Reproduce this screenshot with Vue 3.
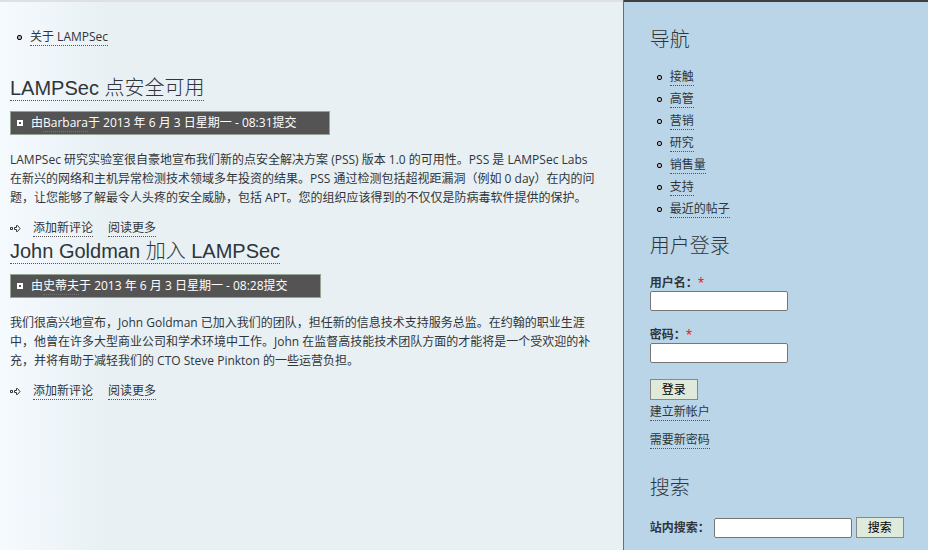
<script setup>
import { ref } from 'vue'

const posts = [
  {
    title: 'LAMPSec 点安全可用',
    author: 'Barbara',
    date: '2013 年 6 月 3 日星期一 - 08:31提交',
    body: 'LAMPSec 研究实验室很自豪地宣布我们新的点安全解决方案 (PSS) 版本 1.0 的可用性。PSS 是 LAMPSec Labs 在新兴的网络和主机异常检测技术领域多年投资的结果。PSS 通过检测包括超视距漏洞（例如 0 day）在内的问题，让您能够了解最令人头疼的安全威胁，包括 APT。您的组织应该得到的不仅仅是防病毒软件提供的保护。',
  },
  {
    title: 'John Goldman 加入 LAMPSec',
    author: '史蒂夫',
    date: '2013 年 6 月 3 日星期一 - 08:28提交',
    body: '我们很高兴地宣布，John Goldman 已加入我们的团队，担任新的信息技术支持服务总监。在约翰的职业生涯中，他曾在许多大型商业公司和学术环境中工作。John 在监督高技能技术团队方面的才能将是一个受欢迎的补充，并将有助于减轻我们的 CTO Steve Pinkton 的一些运营负担。',
  },
]
const navigation = ['接触', '高管', '营销', '研究', '销售量', '支持', '最近的帖子']
const username = ref('')
const password = ref('')
const query = ref('')
</script>

<template>
  <div class="page">
    <main class="content">
      <ul class="menu primary">
        <li><a href="#">关于 LAMPSec</a></li>
      </ul>
      <article v-for="post in posts" :key="post.title" class="post">
        <h2><a href="#">{{ post.title }}</a></h2>
        <div class="submitted">
          <svg class="marker" viewBox="0 0 6 6" width="6" height="6" aria-hidden="true">
            <rect x="1" y="1" width="4" height="4" fill="none" stroke="#fff" stroke-width="2" />
          </svg>
          <span>由<a href="#">{{ post.author }}</a>于 {{ post.date }}</span>
        </div>
        <p>{{ post.body }}</p>
        <div class="links">
          <svg class="arrow" viewBox="0 0 11 7" width="11" height="7" aria-hidden="true">
            <path d="M0.5 2.5h2v2h-2zM4.5 2.5h2v-2h1l2.5 3-2.5 3h-1v-2h-2z" fill="#fff" stroke="#333" />
          </svg>
          <a href="#">添加新评论</a>
          <a href="#">阅读更多</a>
        </div>
      </article>
    </main>

    <aside class="sidebar">
      <nav>
        <h2>导航</h2>
        <ul class="menu">
          <li v-for="item in navigation" :key="item"><a href="#">{{ item }}</a></li>
        </ul>
      </nav>
      <section class="login">
        <h2>用户登录</h2>
        <form @submit.prevent>
          <div class="field">
            <label for="username">用户名：<span class="required">*</span></label>
            <input id="username" v-model="username" type="text">
          </div>
          <div class="field">
            <label for="password">密码：<span class="required">*</span></label>
            <input id="password" v-model="password" type="password">
          </div>
          <button type="submit">登录</button>
        </form>
        <div class="account"><a href="#">建立新帐户</a></div>
        <div class="account"><a href="#">需要新密码</a></div>
      </section>
      <section>
        <h2>搜索</h2>
        <form class="search" @submit.prevent>
          <label for="search">站内搜索：</label>
          <input id="search" v-model="query" type="text">
          <button type="submit">搜索</button>
        </form>
      </section>
    </aside>
  </div>
</template>

<style>
body {
  margin: 0;
}
</style>

<style scoped>
.page {
  display: flex;
  min-height: 100vh;
  font: 12px/20px "Open Sans", "Noto Sans CJK SC", sans-serif;
  color: #2f353a;
  text-spacing-trim: space-all;
}
.content {
  box-sizing: border-box;
  flex: 1;
  min-width: 0;
  padding: 24px 24px 0 10px;
  border-top: 2px solid #dee0e2;
  background: linear-gradient(90deg, #f5faff 0, #e8f0f4 110px);
}
.sidebar {
  box-sizing: border-box;
  width: 32.9%;
  padding: 26px 10px 12px 26px;
  border-left: 1px solid #62717b;
  background: #bad5e8;
  position: relative;
}
.sidebar::before {
  content: "";
  position: absolute;
  inset: 0 0 auto 0;
  height: 2px;
  background: #3f4041;
}
a {
  color: inherit;
  text-decoration: none;
  border-bottom: 1px dotted #555;
}
h2 {
  margin: 0;
  font: 20px/28px "Liberation Sans", "Noto Sans CJK SC", sans-serif;
  font-weight: 300;
}
.menu {
  margin: 0;
  padding: 0;
  list-style: none;
}
.menu li {
  display: flex;
  align-items: center;
  gap: 8px;
  height: 22px;
  padding-left: 7px;
}
.menu a {
  line-height: 16px;
}
.menu li::before {
  content: "";
  box-sizing: border-box;
  width: 5px;
  height: 5px;
  border: 1px solid #000;
  border-radius: 2px;
  background: #bbb;
}
.primary {
  margin-bottom: 26px;
}
.post h2 a {
  display: inline-block;
  line-height: 23px;
}
.submitted {
  display: flex;
  align-items: center;
  gap: 8px;
  width: fit-content;
  margin-top: 9px;
  padding: 1px 32px 1px 6px;
  border: 1px solid #94a594;
  background: #545454;
  color: #fff;
}
.submitted a {
  border-bottom-color: #777;
}
.post p {
  margin: 15px 0 12px;
  line-height: 19px;
}
.links {
  display: flex;
  align-items: center;
  height: 18px;
}
.links a {
  margin-right: 15px;
  line-height: 16px;
}
.arrow {
  margin-right: 12px;
}
.sidebar .menu {
  margin: 12px 0;
}
.login {
  margin-bottom: 16px;
}
.login form {
  padding: 15px 0 2px;
}
.field {
  margin-bottom: 16px;
}
label {
  font-weight: 700;
}
.field label {
  display: block;
  line-height: 16px;
}
.required {
  color: #f00;
  font-weight: 400;
}
input {
  box-sizing: border-box;
  display: block;
  width: 138px;
  height: 20px;
  padding: 1px 2px;
  border: 1px solid #767676;
  border-radius: 2px;
  background: #fff;
  font: inherit;
}
button {
  box-sizing: border-box;
  display: block;
  height: 21px;
  padding: 0 11px;
  border: 1px solid #888;
  background: #e0eadb;
  color: #000;
  font: 12px/18px "Open Sans", "Noto Sans CJK SC", sans-serif;
}
.account {
  height: 28px;
}
.account a {
  display: inline-block;
  line-height: 16px;
}
.search {
  display: flex;
  align-items: center;
  gap: 4px;
  margin-top: 15px;
}
.search label {
  flex: none;
}
.search button {
  flex: none;
}
</style>
